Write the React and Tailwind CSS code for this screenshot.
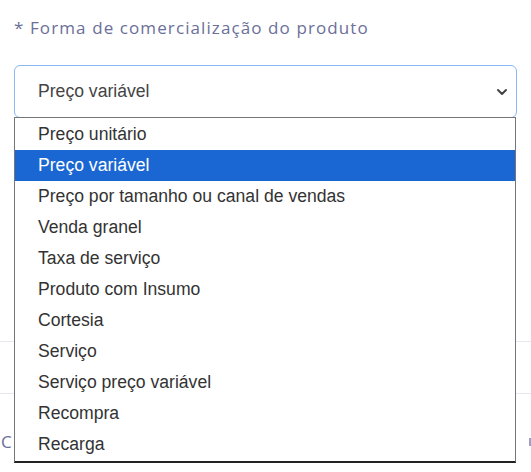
import { ChevronDown } from 'lucide-react';

const options = [
  'Preço unitário',
  'Preço variável',
  'Preço por tamanho ou canal de vendas',
  'Venda granel',
  'Taxa de serviço',
  'Produto com Insumo',
  'Cortesia',
  'Serviço',
  'Serviço preço variável',
  'Recompra',
  'Recarga',
];

export default function App() {
  const selected = 'Preço variável';

  return (
    <div className="relative h-[472px] w-[531px] overflow-hidden bg-white">
      {/* Label */}
      <div className="pl-[14px] pt-[16px] text-[17px] leading-[24px] text-[#6b6f99] [font-family:'Open_Sans',sans-serif] tracking-[1.1px]">
        * Forma de comercialização do produto
      </div>

      {/* Select */}
      <div className="relative mt-[25px] ml-[14px] w-[503px]">
        <div className="flex h-[53px] items-center justify-between rounded-[6px] border border-[#8ab8f5] pl-[23px] pr-[6px] text-[17.6px] text-[#444] [font-family:'Liberation_Sans',Arial,sans-serif]">
          <span>{selected}</span>
          <ChevronDown size={16} strokeWidth={3} className="text-[#444]" />
        </div>

        {/* Listbox */}
        <ul className="absolute left-0 top-[52px] z-10 w-[502px] border border-b-2 border-[#767676] border-b-[#222] bg-white py-[1px] text-[17.6px] text-[#333] [font-family:'Liberation_Sans',Arial,sans-serif]">
          {options.map((o) => (
            <li
              key={o}
              className={
                o === selected
                  ? 'flex h-[31px] items-center bg-[#1a67d3] pl-[23px] text-white'
                  : 'flex h-[31px] items-center pl-[23px]'
              }
            >
              {o}
            </li>
          ))}
        </ul>
      </div>

      {/* Content behind the dropdown */}
      <div className="mt-[223px] h-px w-full bg-[#e6e8f0]" />
      <div className="mt-[51px] h-px w-full bg-[#e6e8f0]" />
      <div className="mt-[36px] flex items-center justify-between text-[17px] leading-[24px] text-[#6b6f99] [font-family:'Open_Sans',sans-serif]">
        <span className="pl-[1px]">C</span>
        <span className="h-[8px] w-[2px] bg-[#9aa0c8]" />
      </div>
    </div>
  );
}
